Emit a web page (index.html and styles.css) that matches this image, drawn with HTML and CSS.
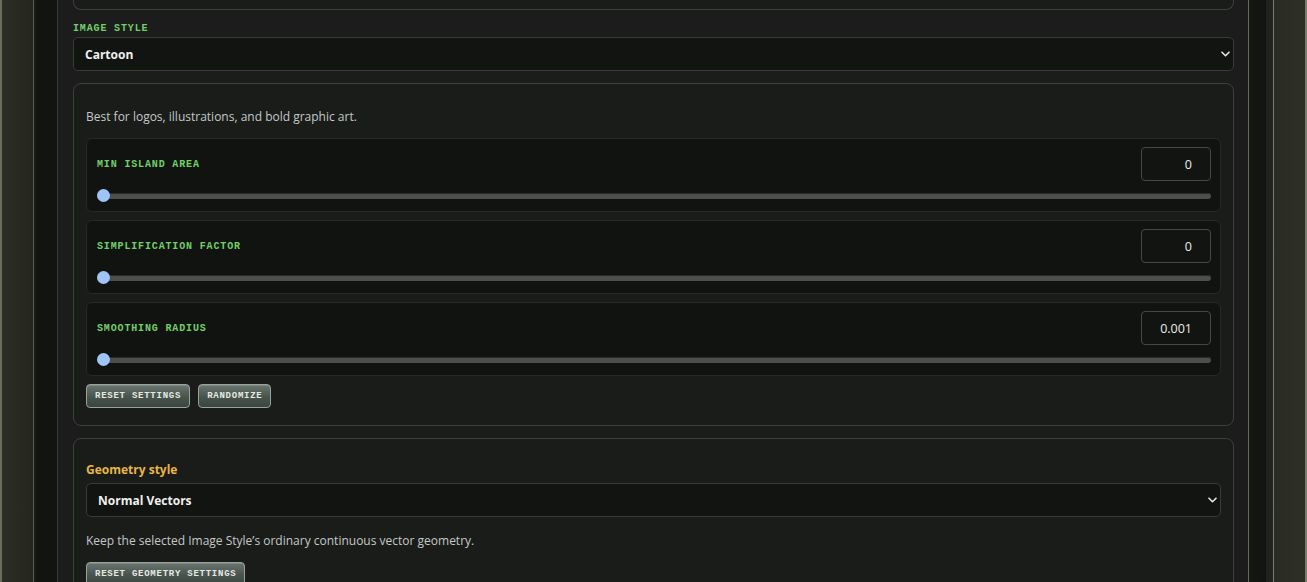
FILE: index.html
```html
<!DOCTYPE html>
<html lang="en">
<head>
<meta charset="utf-8">
<title>Image style settings</title>
<link rel="stylesheet" href="styles.css">
</head>
<body>
<div class="frame">
  <div class="rail rail-left"></div>
  <main class="main">
    <div class="card card-top"></div>

    <div class="field">
      <label class="mono-label">Image style</label>
      <div class="select-wrap">
        <select class="select"><option>Cartoon</option></select>
        <svg class="chev" width="9" height="6" viewBox="0 0 9 6"><path d="M1 1.2l3.5 3.5 3.5-3.5" fill="none" stroke="#e6e6e6" stroke-width="1.6" stroke-linecap="round" stroke-linejoin="round"/></svg>
      </div>
    </div>

    <section class="card card-style">
      <p class="desc">Best for logos, illustrations, and bold graphic art.</p>

      <div class="slider-block">
        <div class="slider-head">
          <span class="mono-label">Min island area</span>
          <input class="num" type="text" value="0">
        </div>
        <input class="range" type="range" min="0" max="100" value="0">
      </div>

      <div class="slider-block">
        <div class="slider-head">
          <span class="mono-label">Simplification factor</span>
          <input class="num" type="text" value="0">
        </div>
        <input class="range" type="range" min="0" max="100" value="0">
      </div>

      <div class="slider-block">
        <div class="slider-head">
          <span class="mono-label">Smoothing radius</span>
          <input class="num" type="text" value="0.001">
        </div>
        <input class="range" type="range" min="0" max="100" value="0">
      </div>

      <div class="btn-row">
        <button class="btn">Reset settings</button>
        <button class="btn">Randomize</button>
      </div>
    </section>

    <section class="card card-geo">
      <h3 class="gold-title">Geometry style</h3>
      <div class="select-wrap">
        <select class="select"><option>Normal Vectors</option></select>
        <svg class="chev" width="9" height="6" viewBox="0 0 9 6"><path d="M1 1.2l3.5 3.5 3.5-3.5" fill="none" stroke="#e6e6e6" stroke-width="1.6" stroke-linecap="round" stroke-linejoin="round"/></svg>
      </div>
      <p class="desc desc-geo">Keep the selected Image Style’s ordinary continuous vector geometry.</p>
      <div class="btn-row">
        <button class="btn">Reset geometry settings</button>
      </div>
    </section>
  </main>
  <div class="rail rail-right"></div>
</div>
</body>
</html>
```

FILE: styles.css
```css
* { box-sizing: border-box; }

html, body {
  margin: 0;
  padding: 0;
  height: 100%;
  overflow: hidden;
  background: #1c1c1c;
  font-family: "Open Sans", "Noto Sans", sans-serif;
}

.frame {
  display: flex;
  height: 100vh;
}

.rail { flex: none; height: 100%; }

.rail-left {
  width: 58px;
  background: linear-gradient(to right,
    #6a6e5a 0, #6a6e5a 2px,
    #2c2e26 2px, #25271f 33px,
    #5a5c50 33px, #5a5c50 34px,
    #1c1e18 34px, #121410 37px, #121410 57px,
    #383836 57px, #383836 58px);
}

.rail-right {
  width: 59px;
  background: linear-gradient(to right,
    #6a6a62 0, #6a6a62 1px,
    #141610 1px, #121410 18px,
    #20221d 18px, #22241f 25px,
    #7a7c70 25px, #7a7c70 26px,
    #2a2c24 26px, #2e3028 57px,
    #7a7e68 57px, #7a7e68 59px);
}

.main {
  flex: 1;
  min-width: 0;
  background: #1c1c1c;
  padding: 0 14px 0 15px;
  display: flex;
  flex-direction: column;
}

.card {
  background: #1a1c19;
  border: 1px solid #3e403b;
  border-radius: 8px;
  flex: none;
}

.card-top {
  height: 10px;
  border-top: none;
  border-radius: 0 0 8px 8px;
}

.field {
  margin-top: 13px;
  display: flex;
  flex-direction: column;
}

.mono-label {
  font-family: "Liberation Mono", "DejaVu Sans Mono", monospace;
  font-weight: bold;
  font-size: 10px;
  line-height: 12px;
  letter-spacing: 0.85px;
  text-transform: uppercase;
  color: #72cf68;
}

.field .mono-label { margin-bottom: 2px; }

.select-wrap {
  position: relative;
  height: 34px;
}

.select {
  appearance: none;
  -webkit-appearance: none;
  width: 100%;
  height: 34px;
  background: #121411;
  border: 1px solid #393b37;
  border-radius: 5px;
  color: #f0f0ee;
  font-family: "Open Sans", "Noto Sans", sans-serif;
  font-weight: bold;
  font-size: 12px;
  padding: 0 11px;
  outline: none;
}

.chev {
  position: absolute;
  right: 4px;
  top: 14px;
  pointer-events: none;
}

.card-style {
  margin-top: 12px;
  padding: 24px 12px 17px;
}

.desc {
  margin: 0 0 12px;
  font-size: 12px;
  line-height: 18px;
  color: #c4c8c8;
}

.slider-block {
  background: #111311;
  border: 1px solid #272927;
  border-radius: 6px;
  padding: 8px 9px 9px 10px;
  margin-bottom: 8px;
}

.slider-head {
  display: flex;
  align-items: center;
  justify-content: space-between;
  height: 34px;
}

.slider-head .mono-label { margin-top: 1px; }

.num {
  width: 70px;
  height: 34px;
  background: #121411;
  border: 1px solid #464843;
  border-radius: 4px;
  color: #ececea;
  font-family: "Open Sans", "Noto Sans", sans-serif;
  font-size: 12.5px;
  text-align: right;
  padding: 0 18px 0 6px;
  outline: none;
}

.range {
  -webkit-appearance: none;
  appearance: none;
  display: block;
  width: 100%;
  height: 13px;
  margin: 8px 0 0;
  background: transparent;
}

.range::-webkit-slider-runnable-track {
  height: 6px;
  border-radius: 3px;
  background: #4e4e4e;
  box-shadow: inset 0 1px 0 #2a2a2a;
}

.range::-webkit-slider-thumb {
  -webkit-appearance: none;
  width: 13px;
  height: 13px;
  margin-top: -3.5px;
  border-radius: 50%;
  background: #9ec4f8;
  border: none;
}

.btn-row {
  display: flex;
  gap: 8px;
}

.btn {
  height: 24px;
  padding: 0 8px;
  background: linear-gradient(to bottom, #6b756f, #48534c 55%, #3c4640);
  border: 1px solid #98a29c;
  border-radius: 4px;
  color: #e6eae6;
  font-family: "Liberation Mono", "DejaVu Sans Mono", monospace;
  font-weight: bold;
  font-size: 9px;
  letter-spacing: 0.75px;
  text-transform: uppercase;
  box-shadow: inset 0 1px 0 rgba(255,255,255,0.15);
}

.card-geo {
  margin-top: 12px;
  padding: 22px 12px 20px;
}

.gold-title {
  margin: 0 0 4px;
  font-size: 12px;
  line-height: 18px;
  font-weight: bold;
  color: #e8b546;
}

.desc-geo {
  margin: 15px 0 12px;
}
```
